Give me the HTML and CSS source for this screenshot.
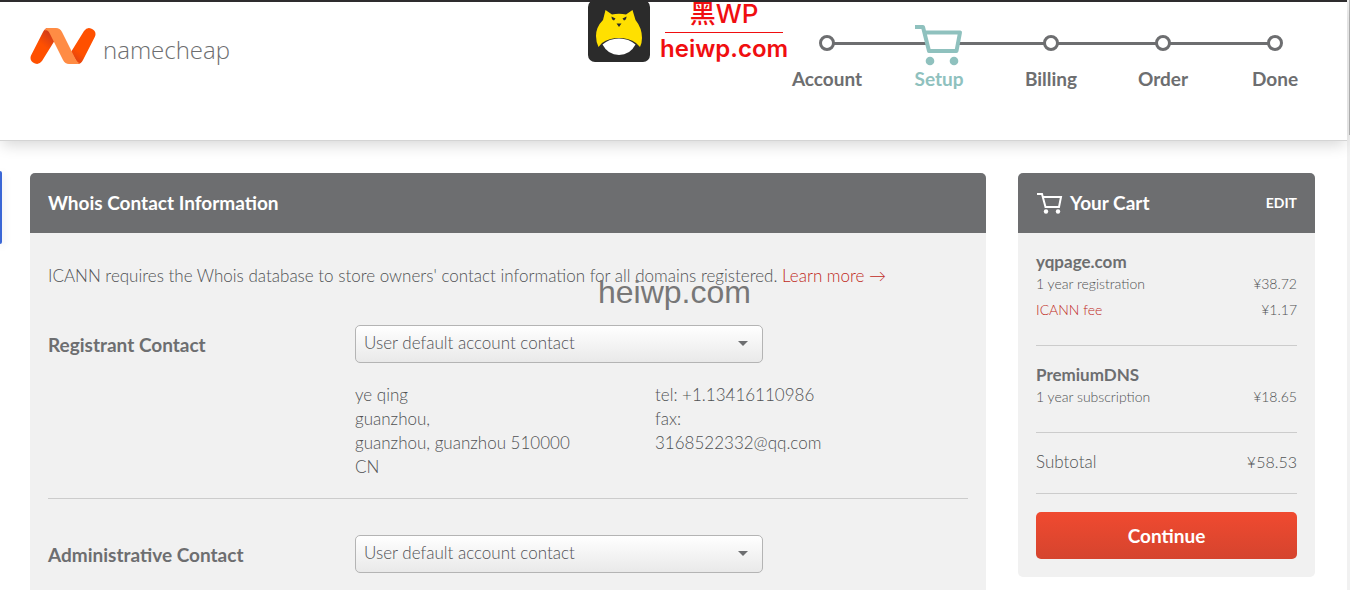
FILE: index.html
```html
<!DOCTYPE html>
<html lang="en">
<head>
<meta charset="utf-8">
<title>Namecheap - Whois Contact Information</title>
<link rel="stylesheet" href="styles.css">
</head>
<body>
<div class="page">
  <header class="header">
    <a class="logo" href="#" aria-label="namecheap">
      <svg class="logo-mark" viewBox="0 0 66 36" width="66" height="36" aria-hidden="true">
        <defs>
          <linearGradient id="fold-a" x1="0" y1="1" x2="0.600" y2="0"><stop offset="0.600" stop-color="#ff5000"/><stop offset="1" stop-color="#d03a1a"/></linearGradient>
          <linearGradient id="fold-b" x1="0.600" y1="0" x2="0" y2="1"><stop offset="0.600" stop-color="#ff5000"/><stop offset="1" stop-color="#d03a1a"/></linearGradient>
        </defs>
        <path d="M1 27.500 L13 4 Q15 0 18 0 L25 12 L12 33 Q9 37 5 35.500 Q-1 33 1 27.500Z" fill="url(#fold-a)"/>
        <path d="M65 8.500 L53 32 Q51 36 48 36 L41 24 L54 3 Q57 -1 61 0.500 Q67 3 65 8.500Z" fill="url(#fold-b)"/>
        <path d="M17 0 H26 Q30 0 32 4 L45 30 Q47.500 35 50 35 Q49 36 47 36 H39 Q35 36 33 32 L20 6 Q18 1 14.500 2.500 Q15.500 0 17 0Z" fill="#ff8c44"/>
      </svg>
      <span class="logo-text">namecheap</span>
    </a>
    <ol class="steps">
      <li class="step"><span class="step-mark"><i class="dot"></i></span>Account</li>
      <li class="step current"><span class="step-mark">
        <svg viewBox="0 0 48 42" width="48" height="42" aria-hidden="true">
          <path d="M10 8 H44 L41 27 H14Z" fill="#fff"/>
          <path d="M0 3 H8 L14 27 H41.500 L45 8.500 H10" fill="none" stroke="#8fc1be" stroke-width="4" stroke-linejoin="round"/>
          <circle cx="15" cy="37" r="4.300" fill="#8fc1be"/><circle cx="39" cy="37" r="4.300" fill="#8fc1be"/>
        </svg></span>Setup</li>
      <li class="step"><span class="step-mark"><i class="dot"></i></span>Billing</li>
      <li class="step"><span class="step-mark"><i class="dot"></i></span>Order</li>
      <li class="step"><span class="step-mark"><i class="dot"></i></span>Done</li>
    </ol>
    <div class="stamp">
      <svg viewBox="0 0 62 62" width="62" height="62" aria-hidden="true">
        <rect width="62" height="62" rx="7" fill="#2b2b2b"/>
        <path d="M17.500 10 L24 14.500 Q31 13 38 14.500 L44.500 10 L47.500 20 Q54 28 54 38 Q54 43 52 47 L48 43 Q41 38 31 38 T14 43 L10.500 47 Q8 42 8 36 Q8 27 15 20Z" fill="#ffe000"/>
        <path d="M14.500 44.500 Q21 38.500 31 38.500 T47.500 44.500 Q42 55 31 55 T14.500 44.500Z" fill="#fff"/>
        <path d="M23.500 16.500 L27.500 18.500 L26 20.500 Q23.500 20 23.500 16.500Z M38.500 16.500 L34.500 18.500 L36 20.500 Q38.500 20 38.500 16.500Z M28.500 23.500 H33.500 L31 27Z" fill="#2b2b2b"/>
      </svg>
      <div class="stamp-text"><span class="stamp-top">黑WP</span><span class="stamp-site">heiwp.com</span></div>
    </div>
  </header>

  <main class="main">
    <section class="panel">
      <h1 class="panel-head">Whois Contact Information</h1>
      <div class="panel-body">
        <p class="intro">ICANN requires the Whois database to store owners' contact information for all domains registered. <a href="#">Learn more →</a><span class="watermark">heiwp.com</span></p>
        <div class="contact">
          <label class="contact-label" for="registrant">Registrant Contact</label>
          <div class="contact-info">
            <div class="select-wrap"><select id="registrant" class="select"><option>User default account contact</option></select></div>
            <div class="details">
              <address>ye qing<br>guanzhou,<br>guanzhou, guanzhou 510000<br>CN</address>
              <address>tel: +1.13416110986<br>fax:<br>3168522332@qq.com</address>
            </div>
          </div>
        </div>
        <div class="contact">
          <label class="contact-label" for="administrative">Administrative Contact</label>
          <div class="contact-info">
            <div class="select-wrap"><select id="administrative" class="select"><option>User default account contact</option></select></div>
          </div>
        </div>
      </div>
    </section>

    <aside class="panel cart">
      <div class="panel-head">
        <svg viewBox="0 0 27 22" width="27" height="22" aria-hidden="true">
          <path d="M1 2 H6 L9.500 15 H23 L25 5 H7" fill="none" stroke="#fff" stroke-width="2"/>
          <circle cx="10" cy="19.500" r="2.200" fill="#fff"/><circle cx="22" cy="19.500" r="2.200" fill="#fff"/>
        </svg>
        <h2 class="cart-title">Your Cart</h2>
        <a class="edit" href="#">EDIT</a>
      </div>
      <div class="cart-body">
        <div class="item">
          <h3 class="item-name">yqpage.com</h3>
          <div class="line"><span>1 year registration</span><span>¥38.72</span></div>
          <div class="line"><a href="#">ICANN fee</a><span>¥1.17</span></div>
        </div>
        <div class="item">
          <h3 class="item-name">PremiumDNS</h3>
          <div class="line"><span>1 year subscription</span><span>¥18.65</span></div>
        </div>
        <div class="subtotal"><span>Subtotal</span><span class="total">¥58.53</span></div>
        <button class="continue" type="button">Continue</button>
      </div>
    </aside>
  </main>
  <div class="side-tab"></div>
</div>
<div class="scroll-track"><div class="scroll-thumb"></div></div>
</body>
</html>
```
FILE: styles.css
```css
* { box-sizing: border-box; }
body {
  margin: 0;
  height: 100vh;
  overflow: hidden;
  display: flex;
  background: #fff;
  color: #505154;
  font: 300 17px/24px Lato, "Open Sans", sans-serif;
}
h1, h2, h3, p, ol { margin: 0; padding: 0; }
a { color: #c02a1c; text-decoration: none; }
address { font-style: normal; }

.page { position: relative; flex: 1; min-width: 0; display: flex; flex-direction: column; }
.scroll-track { width: 3px; background: #f1f1f1; display: flex; justify-content: flex-end; }
.scroll-thumb { width: 1px; height: 135px; background: #b4b4b4; }

.header {
  position: relative;
  flex: none;
  display: flex;
  justify-content: space-between;
  align-items: flex-start;
  height: 141px;
  padding: 20px 16px 0 30px;
  border-top: 2px solid #2e2c2e;
  border-bottom: 1px solid #d4d4d4;
  box-shadow: 0 6px 14px -2px rgba(0, 0, 0, 0.16);
}
.logo { display: flex; gap: 7px; padding-top: 6px; color: #6d6e70; }
.logo-mark { display: block; fill: none; }
.logo-text { font: 300 24px/44px "Open Sans", sans-serif; }

.steps { display: flex; list-style: none; }
.step {
  position: relative;
  width: 112px;
  text-align: center;
  color: #6d6e70;
  font-size: 19px;
  font-weight: 700;
}
.step-mark { position: relative; z-index: 1; display: grid; place-items: center; height: 45px; }
.step + .step::before {
  content: "";
  position: absolute;
  top: 20px;
  left: -50%;
  width: 100%;
  height: 3px;
  background: #6d6e70;
}
.dot { width: 16px; height: 16px; border: 3px solid #6d6e70; border-radius: 50%; background: #fff; margin-bottom: 4px; }
.step.current { color: #8fc1be; }

.stamp { position: absolute; top: -2px; left: 588px; display: flex; gap: 9px; color: #f00e10; }
.stamp svg { display: block; }
.stamp-text { display: flex; flex-direction: column; align-items: center; padding-left: 1px; }
.stamp-top {
  width: 118px;
  border-bottom: 1px solid #f00e10;
  text-align: center;
  font: 500 26px/28px Inter, "Noto Sans CJK SC", sans-serif;
  padding-bottom: 4px;
}
.stamp-site { font: 600 24px/32px Inter, "Liberation Sans", sans-serif; }

.main {
  flex: 1;
  display: grid;
  grid-template-columns: minmax(0, 1fr) 297px;
  gap: 32px;
  padding: 32px 32px 0 30px;
}
.panel { background: #f1f1f1; border-radius: 5px; overflow: hidden; }
.panel-head {
  display: flex;
  align-items: center;
  height: 60px;
  padding: 0 18px;
  background: #6d6e70;
  color: #fff;
  font-size: 19px;
  font-weight: 700;
}
.panel-body { padding: 31px 18px 0; }
.intro { position: relative; }
.watermark {
  position: absolute;
  top: 10px;
  left: 550px;
  color: #777;
  font: 400 32px/36px "Liberation Sans", Arial, sans-serif;
}
.contact {
  display: grid;
  grid-template-columns: 307px minmax(0, 1fr);
  padding: 37px 0 19px;
}
.contact + .contact { border-top: 1px solid #ccc; padding-top: 36px; }
.contact-label { color: #6d6e70; font-size: 19px; font-weight: 700; line-height: 40px; }
.select-wrap { position: relative; max-width: 408px; }
.select-wrap::after {
  content: "";
  position: absolute;
  top: 16px;
  right: 15px;
  border: 5px solid transparent;
  border-top-color: #6d6e70;
  border-bottom: 0;
  pointer-events: none;
}
.select {
  display: block;
  width: 100%;
  height: 38px;
  padding: 0 8px 2px;
  border: 1px solid #b4b4b4;
  border-radius: 5px;
  appearance: none;
  color: inherit;
  font: inherit;
  background: linear-gradient(#fff, #e9e9e9);
}
.details { display: grid; grid-template-columns: 300px 1fr; padding-top: 20px; }

.cart { align-self: start; }
.cart-title { flex: 1; margin-left: 7px; font-size: 19px; }
.edit { color: #fff; font-size: 14px; }
.cart-body { padding: 17px 18px 18px; }
.item { padding-bottom: 25px; margin-bottom: 17px; border-bottom: 1px solid #ccc; }
.item-name { color: #6d6e70; font-size: 17px; line-height: 24px; }
.line { display: flex; justify-content: space-between; font-size: 14px; line-height: 20px; }
.line + .line { padding-top: 6px; }
.subtotal { display: flex; justify-content: space-between; padding-bottom: 19px; border-bottom: 1px solid #ccc; }
.total { font-size: 16px; }
.continue {
  display: block;
  width: 100%;
  height: 47px;
  margin-top: 18px;
  border: 0;
  border-radius: 5px;
  background: linear-gradient(#f04a30, #d5442e);
  color: #fff;
  font: 700 19px/24px Lato, sans-serif;
}
.side-tab {
  position: absolute;
  top: 171px;
  left: 0;
  width: 2px;
  height: 73px;
  border-radius: 0 3px 3px 0;
  background: #3b67d6;
  box-shadow: 0 2px 10px rgba(0, 0, 60, 0.2);
}
```
